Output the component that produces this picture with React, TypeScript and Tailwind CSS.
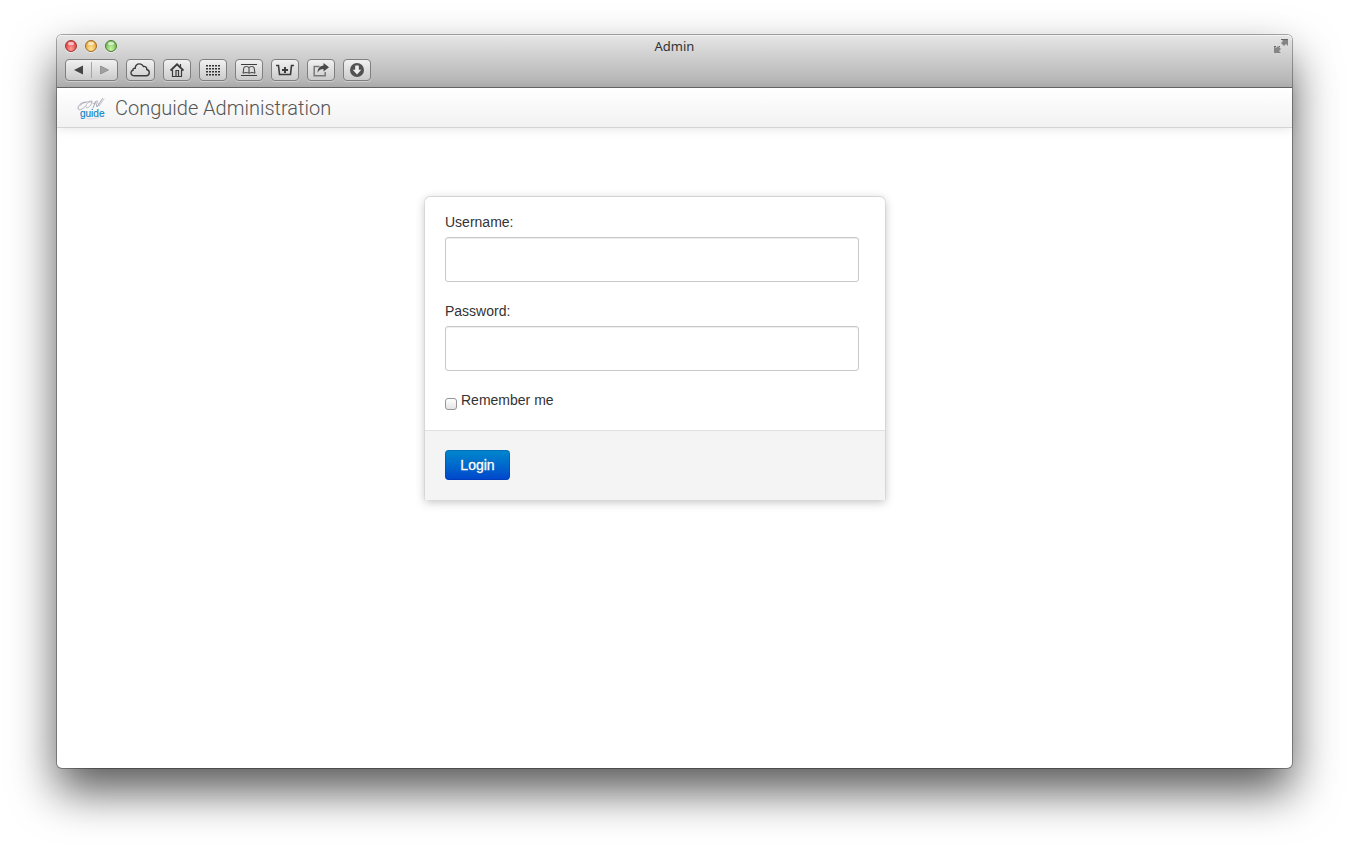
import type { ReactNode } from "react";

function ToolButton({ label, children }: { label: string; children: ReactNode }) {
  return (
    <button
      type="button"
      aria-label={label}
      className="flex h-[22px] min-w-7 items-center justify-center rounded border border-[#7f7f7f] bg-linear-to-b from-[#f1f1f1] to-[#cbcbcb] px-[3px] text-[#3c3c3c] shadow-[0_1px_0_rgba(255,255,255,0.35)]"
    >
      {children}
    </button>
  );
}

function TrafficLight({ label, tone }: { label: string; tone: string }) {
  return (
    <button
      type="button"
      aria-label={label}
      className={`flex size-3 justify-center rounded-full border shadow-[0_1px_0_rgba(255,255,255,0.5)] ${tone}`}
    >
      <span className="mt-px h-[3px] w-1.5 rounded-full bg-white/60" />
    </button>
  );
}

function TitleBar() {
  return (
    <div className="grid h-[22px] grid-cols-3 items-center px-2">
      <div className="flex gap-2">
        <TrafficLight label="Close" tone="border-[#9c3532] bg-radial-[at_50%_80%] from-[#ff9d98] to-[#d8302f]" />
        <TrafficLight label="Minimize" tone="border-[#a06a22] bg-radial-[at_50%_80%] from-[#ffe69a] to-[#e39a2c]" />
        <TrafficLight label="Zoom" tone="border-[#4c7d36] bg-radial-[at_50%_80%] from-[#c9f5a6] to-[#5fae42]" />
      </div>
      <h1 className="text-center font-['Noto_Sans',sans-serif] text-[13px] leading-5 text-[#333]">Admin</h1>
      <button type="button" aria-label="Full screen" className="-mr-1 justify-self-end">
        <svg width="14" height="14" viewBox="0 0 14 14" fill="#858585">
          <path d="M7 0h7v7l-2-2-2 2-3-3 2-2z" />
          <path d="M0 7l2 2 2-2 3 3-2 2 2 2H0z" />
          <path d="M7 .5h7M0 7.5h2M5 7.5h1" stroke="#666" />
        </svg>
      </button>
    </div>
  );
}

function Toolbar() {
  return (
    <div className="mt-0.5 flex gap-2 px-2 pb-1.5">
      <div className="flex h-[22px] items-center rounded border border-[#7f7f7f] bg-linear-to-b from-[#f1f1f1] to-[#cbcbcb] shadow-[0_1px_0_rgba(255,255,255,0.35)]">
        <button type="button" aria-label="Back" className="flex h-4 w-[25px] items-center justify-center">
          <svg width="9" height="10" viewBox="0 0 9 10">
            <path d="M9 .5v9L0 5z" fill="#454545" />
          </svg>
        </button>
        <span className="h-4 w-px bg-[#a5a5a5]" />
        <button type="button" aria-label="Forward" className="flex h-4 w-[25px] items-center justify-center">
          <svg width="9" height="10" viewBox="0 0 9 10">
            <path d="M.5 1v8L8.500 5z" fill="#a0a0a0" stroke="#858585" strokeWidth=".7" />
          </svg>
        </button>
      </div>
      <ToolButton label="iCloud tabs">
        <svg width="21" height="14" viewBox="0 0 21 14" fill="none" stroke="currentColor" strokeWidth="1.400">
          <path d="M4.900 12.800h11.400a3.200 3.200 0 0 0 .5-6.300C17 4.300 15.100 3 13.400 3.500 12.500 1.800 11 .9 9.300.9 6.800.9 5.100 2.800 5.200 5.200 3.500 5 2.700 6.300 3 7.200 1.500 7.500 1 8.700 1 9.700c0 1.800 1.600 3.100 3.900 3.100z" />
        </svg>
      </ToolButton>
      <ToolButton label="Home">
        <svg width="14" height="14" viewBox="0 0 14 14" fill="none" stroke="currentColor">
          <path d="M.5 7.500L7 1.300l6.500 6.200" strokeWidth="1.800" />
          <path d="M2.500 7v6.500h9V7M10.500 4V1" strokeWidth="1.200" />
          <path d="M6 13V7.500h2.500V13M8 10h1" strokeWidth="1.200" />
        </svg>
      </ToolButton>
      <ToolButton label="Top sites">
        <svg width="14" height="12" viewBox="0 0 14 12" fill="#333">
          {[1, 4, 7, 10].map((y) =>
            [0, 3, 6, 9, 12].map((x) => <rect key={`${x}-${y}`} x={x} y={y} width="2" height="1.500" />),
          )}
        </svg>
      </ToolButton>
      <ToolButton label="Bookmarks">
        <svg width="16" height="12" viewBox="0 0 16 12" fill="none" stroke="currentColor">
          <path d="M0 .5h16M0 11.500h16" strokeWidth="1.200" />
          <path d="M8 3.500C6.500 2.300 4.500 2.300 3 3.200L2 9.200c1.800-.8 4.300-.8 6 0 1.700-.8 4.200-.8 6 0l-1-6C11.500 2.300 9.500 2.300 8 3.500zM8 3.500V9" />
        </svg>
      </ToolButton>
      <ToolButton label="Add to reading list">
        <svg width="18" height="12" viewBox="0 0 18 12" fill="none" stroke="currentColor">
          <path d="M0 1.500h2.500l1 9h11l1-9H18" strokeWidth="1.600" />
          <path d="M9 3v6M6 6h6" strokeWidth="2" />
        </svg>
      </ToolButton>
      <ToolButton label="Share">
        <svg width="16" height="14" viewBox="0 0 16 14">
          <path d="M6.500 3.500H1.200v9.300h11V9" fill="none" stroke="#777" strokeWidth="1.500" />
          <path d="M10.500 0L16 4.300l-5.500 4.200V6C7.800 6 6 7 4.500 9.800 4.600 5.600 6.800 3 10.500 2.600z" fill="#484848" />
        </svg>
      </ToolButton>
      <ToolButton label="Downloads">
        <svg width="14" height="14" viewBox="0 0 14 14">
          <circle cx="7" cy="7" r="7" fill="#515151" />
          <path d="M5.200 2.600h3.600v4.200h2.500L7 11.600 2.700 6.800h2.500z" fill="#eee" />
        </svg>
      </ToolButton>
    </div>
  );
}

function Logo() {
  return (
    <svg width="30" height="24" viewBox="0 0 30 24" role="img" aria-label="Con guide">
      <g fill="none" stroke="#a9aab8" strokeLinecap="round" strokeLinejoin="round">
        <path d="M9 6.500C6 5 1.500 8.500 1 12c0 3 4 2 7-1.500" />
        <path d="M15 6C11.500 5 8 9 9 11.300c1.500 2 6-2.500 6-5.300M3 9.500c3-3 7-4 12-4.500" strokeWidth=".8" />
        <path d="M16 12L18.500 5.500 20 11 25.500 2.500" />
        <path d="M16 7.500c2 .5 3-1 4-3l2 5.500L27 3" strokeWidth=".7" />
        <path d="M10 22.500c5 1 12 0 16-3.500" stroke="#dadae2" />
      </g>
      <text x="3" y="21" fill="#1685c6" stroke="#1685c6" strokeWidth=".2" fontFamily="Liberation Sans, sans-serif" fontSize="10">
        guide
      </text>
    </svg>
  );
}

function Field({ id, label, type }: { id: string; label: string; type: string }) {
  return (
    <div className="mb-[19px]">
      <label htmlFor={id} className="mb-[5px] block">
        {label}
      </label>
      <input
        id={id}
        name={id}
        type={type}
        className="block h-[45px] w-full rounded-[3px] border border-[#c8c8c8] bg-white px-2 shadow-[inset_0_1px_1px_rgba(0,0,0,0.075)]"
      />
    </div>
  );
}

function LoginForm() {
  return (
    <form
      onSubmit={(event) => event.preventDefault()}
      className="w-full max-w-[460px] rounded-t-[5px] bg-white text-sm leading-5 text-[#333] shadow-[0_-1px_0_rgba(0,0,0,0.1),1px_0_0_rgba(0,0,0,0.05),-1px_0_0_rgba(0,0,0,0.05),0_2px_10px_rgba(0,0,0,0.25)]"
    >
      <div className="pt-[15px] pr-[26px] pb-5 pl-5">
        <Field id="username" label="Username:" type="text" />
        <Field id="password" label="Password:" type="password" />
        <div className="flex items-end gap-1">
          <input
            id="remember"
            type="checkbox"
            className="size-3 appearance-none rounded-[3px] border border-[#959595] bg-linear-to-b from-white to-[#e4e4e4] checked:from-[#5aa5ee] checked:to-[#0066cc]"
          />
          <label htmlFor="remember">Remember me</label>
        </div>
      </div>
      <div className="border-t border-[#e1e1e1] bg-[#f4f4f4] px-5 pt-[19px] pb-5">
        <button
          type="submit"
          className="block h-[30px] min-w-[65px] rounded bg-linear-to-b from-[#0088cc] to-[#0044cc] px-3.5 text-white shadow-[inset_0_0_0_1px_rgba(0,40,140,0.25)] [-webkit-text-stroke:0.3px_white] text-shadow-[0_-1px_0_rgba(0,0,0,0.25)]"
        >
          Login
        </button>
      </div>
    </form>
  );
}

export default function App() {
  return (
    <div className="flex min-h-screen flex-col overflow-hidden bg-white px-[57px] pt-[35px] pb-[79px] font-['Liberation_Sans',Arial,sans-serif]">
      <div className="flex grow flex-col rounded-[5px] bg-white shadow-[0_0_0_1px_rgba(0,0,0,0.32),0_23px_46px_rgba(0,0,0,0.66)]">
        <div className="rounded-t-[5px] border-b border-[#666] bg-linear-to-b from-[#e6e6e6] to-[#b0b0b0] shadow-[inset_0_1px_0_#f3f3f3]">
          <TitleBar />
          <Toolbar />
        </div>
        <header className="flex h-10 items-center border-b border-[#d4d4d4] bg-linear-to-b from-white to-[#f2f2f2] px-5 shadow-[0_1px_10px_rgba(0,0,0,0.1)]">
          <a href="#" className="flex items-center gap-2 font-[Roboto,sans-serif] text-xl font-light text-[#555]">
            <Logo />
            Conguide Administration
          </a>
        </header>
        <main className="flex justify-center pt-[69px] pr-[39px]">
          <LoginForm />
        </main>
      </div>
    </div>
  );
}
